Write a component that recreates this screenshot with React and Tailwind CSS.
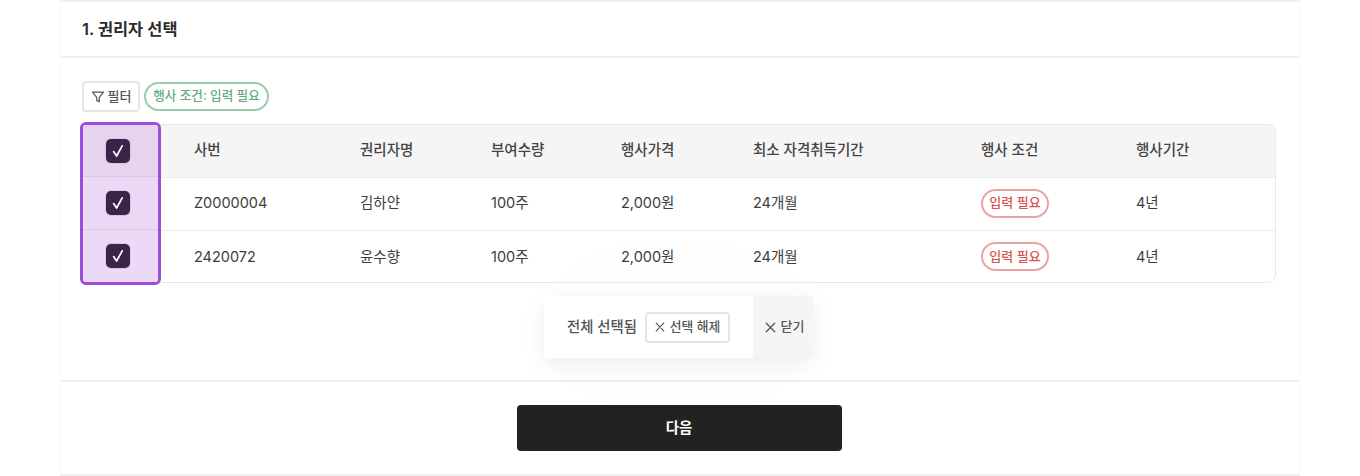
import React from "react";

function Check() {
  return (
    <span className="mr-[5px] flex h-[24px] w-[24px] items-center justify-center rounded-[5px] bg-[#3a2548] shadow-[0_0_0_1px_#d9c4e6]">
      <svg width="16" height="16" viewBox="0 0 16 16" fill="none" stroke="#fff" strokeWidth="1.7" strokeLinecap="round" strokeLinejoin="round">
        <path d="M3.6 8.6 L6.6 13 L12.2 2.8" />
      </svg>
    </span>
  );
}

function X({ size = 10 }) {
  return (
    <svg width={size} height={size} viewBox="0 0 10 10" fill="none" stroke="#555" strokeWidth="1.2" strokeLinecap="round">
      <path d="M1.2 1.2 L8.8 8.8 M8.8 1.2 L1.2 8.8" />
    </svg>
  );
}

const widths = ["w-[166px]", "w-[131px]", "w-[130px]", "w-[132px]", "w-[228px]", "w-[155px]", "flex-1"];

function Row({ cells, header, last }) {
  return (
    <div className={`flex h-[53px] items-center pb-[2px] text-[14.5px] ${header ? "bg-[#f5f5f5] font-medium text-[#444]" : "text-[#3d3d3d]"} ${last ? "" : "border-b border-[#ebebeb]"}`}>
      <div className="w-[78px] shrink-0" />
      {cells.map((c, i) => (
        <div key={i} className={`${widths[i]} ${i === 0 ? "ml-[33px]" : ""} shrink-0 whitespace-nowrap`}>
          {c}
        </div>
      ))}
    </div>
  );
}

function Need() {
  return (
    <span className="inline-flex h-[29px] w-[68px] items-center justify-center rounded-full border-[2px] border-[#eba3a3] text-[13px] font-medium text-[#d9534f]">
      입력 필요
    </span>
  );
}

export default function App() {
  return (
    <div className="h-[476px] w-[1360px] overflow-hidden bg-white px-[60px] font-['Inter','Noto_Sans_CJK_KR',sans-serif]">
      <div className="h-[476px] border-x border-t-2 border-b-2 border-x-[#f7f7f7] border-y-[#f1f1f1]">
        <div className="flex h-[56px] items-center border-b-2 border-[#f0f0f0] pl-[21px] text-[16.4px] font-semibold text-[#2b2b2b]">
          1. 권리자 선택
        </div>
        <div className="h-[324px] border-b-2 border-[#f0f0f0] px-[21px] pt-[23px]">
          <div className="flex items-center gap-[4px]">
            <button className="flex h-[31px] w-[58px] items-center justify-center gap-[3px] rounded-[4px] border-[2px] border-[#e6e6e6] text-[13px] font-medium text-[#555]">
              <svg width="14" height="14" viewBox="0 0 14 14" fill="none" stroke="#555" strokeWidth="1.2" strokeLinejoin="round">
                <path d="M1.5 2.2 H12.5 L8.3 7.4 V11.8 L5.7 10.4 V7.4 Z" />
              </svg>
              필터
            </button>
            <span className="flex h-[29px] w-[125px] items-center justify-center rounded-full border-[2px] border-[#96cfaa] text-[12.6px] font-medium text-[#62ab7f]">
              행사 조건: 입력 필요
            </span>
          </div>
          <div className="relative mt-[12px] h-[159px] w-[1194px]">
            <div className="h-full overflow-hidden rounded-[8px] border border-[#e9e9e9]">
              <Row header cells={["사번", "권리자명", "부여수량", "행사가격", "최소 자격취득기간", "행사 조건", "행사기간"]} />
              <Row cells={["Z0000004", "김하얀", "100주", "2,000원", "24개월", <Need />, "4년"]} />
              <Row last cells={["2420072", "윤수향", "100주", "2,000원", "24개월", <Need />, "4년"]} />
            </div>
            <div className="absolute left-[-2px] top-[-2px] flex h-[163px] w-[81px] flex-col overflow-hidden rounded-[6px] border-[3px] border-[#9b4ddb]">
              <div className="flex h-[52px] items-center justify-center border-b border-[#dcc8e6] bg-[#e6d4ef]"><Check /></div>
              <div className="flex h-[53px] items-center justify-center border-b border-[#dcc8e6] bg-[#ecd9f6]"><Check /></div>
              <div className="flex flex-1 items-center justify-center bg-[#ecd9f6]"><Check /></div>
            </div>
          </div>
          <div className="ml-[462px] mt-[13px] flex h-[62px] w-[269px] overflow-hidden rounded-[4px] text-[#555] shadow-[0_6px_24px_rgba(0,0,0,0.07),0_0_140px_rgba(0,0,0,0.025)]">
            <div className="flex w-[209px] items-center bg-white pl-[23px] text-[14.4px] font-medium">
              전체 선택됨
              <span className="ml-[8px] flex h-[31px] w-[85px] items-center justify-center gap-[5px] rounded-[4px] border-[2px] border-[#e4e4e4] text-[12.8px]">
                <X />선택 해제
              </span>
            </div>
            <div className="flex flex-1 items-center justify-center gap-[5px] bg-[#f5f5f5] pl-[3px] text-[13px] font-medium">
              <X size={11} />닫기
            </div>
          </div>
        </div>
        <div className="flex h-[92px] items-center justify-center pr-[2px]">
          <button className="h-[46px] w-[325px] rounded-[4px] bg-[#222] text-[14.5px] font-semibold text-white">다음</button>
        </div>
      </div>
    </div>
  );
}
